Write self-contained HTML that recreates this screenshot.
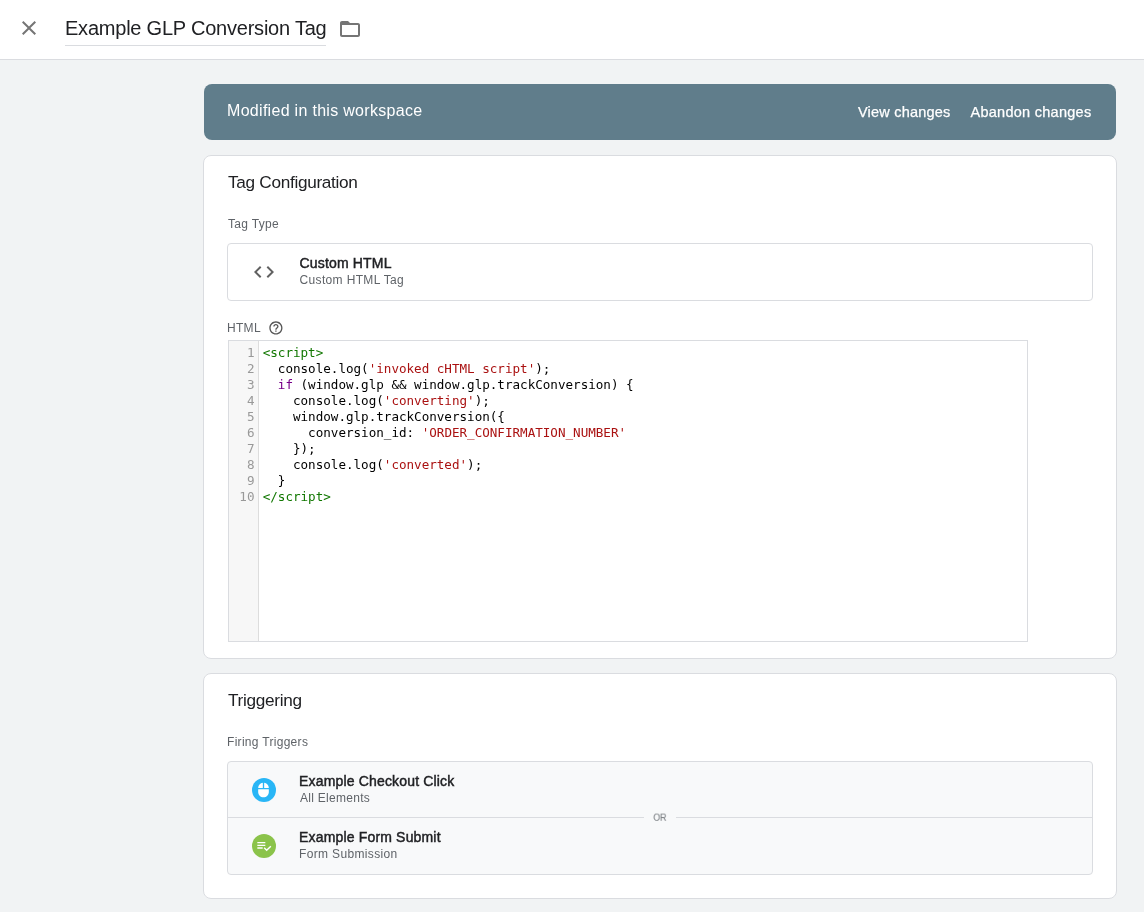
<!DOCTYPE html>
<html lang="en">
<head>
<meta charset="utf-8">
<title>Example GLP Conversion Tag</title>
<style>
*{box-sizing:border-box;margin:0;padding:0}
html,body{width:1144px;height:912px;overflow:hidden}
body{position:relative;background:#f1f3f4;font-family:"Liberation Sans",sans-serif;color:#202124}
#root{position:absolute;left:0;top:0;width:1144px;height:912px;will-change:transform}
.abs{position:absolute}
.tx{position:absolute;white-space:nowrap}
.header{left:0;top:0;width:1144px;height:60px;background:#fff;border-bottom:1px solid #dadce0}
.close{left:17px;top:16px;width:24px;height:24px}
.uline{left:65px;top:45px;width:261px;height:1px;background:#dadce0}
#title{left:65px;top:11px;font-size:20px;letter-spacing:-0.22px;line-height:34px;color:#202124}
.folder{left:338px;top:17px;width:24px;height:24px}
.banner{left:204px;top:84px;width:912px;height:56px;background:#607d8b;border-radius:8px}
.banner .tx{color:#fff}
#msg{left:227px;top:99px;line-height:24px;font-size:16px;letter-spacing:0.3px;color:#fff}
.act{top:100px;line-height:24px;font-size:14.5px;letter-spacing:0.2px;color:#fff;-webkit-text-stroke:0.25px #fff}
.card{left:203px;width:914px;background:#fff;border:1px solid #dadce0;border-radius:8px}
.h2{font-size:17.2px;line-height:24px;letter-spacing:-0.3px;color:#202124}
.lbl{font-size:12px;line-height:16px;letter-spacing:0.3px;color:#5f6368}
.box{left:227px;width:866px;border:1px solid #dadce0;border-radius:4px}
.nm{left:299px;font-size:14px;line-height:18px;letter-spacing:0.17px;color:#202124;-webkit-text-stroke:0.45px #202124}
.sub{left:299.500px;font-size:12px;line-height:16px;letter-spacing:0.35px;color:#5f6368}
.editor{left:228px;top:340px;width:800px;height:302px;border:1px solid #dadce0;background:#fff}
.gutter{left:229px;top:341px;width:30px;height:300px;background:#f7f7f7;border-right:1px solid #ddd}
.code{font-family:"DejaVu Sans Mono","Liberation Mono",monospace;font-size:12.6px;line-height:16px}
.ln{position:absolute;left:228px;width:26.5px;text-align:right;color:#999;height:16px;white-space:pre}
.cl{position:absolute;letter-spacing:-0.012px;left:262.700px;height:16px;white-space:pre;color:#000}
.t{color:#170}.s{color:#a11}.k{color:#708}
.ic{width:24px;height:24px}
</style>
</head>
<body>
<div id="root">
<div class="abs header"></div>
<svg class="abs close" viewBox="0 0 24 24"><path d="M19 6.41L17.59 5 12 10.59 6.410 5 5 6.410 10.590 12 5 17.590 6.410 19 12 13.410 17.590 19 19 17.590 13.410 12z" fill="#757575"/></svg>
<div class="tx" id="title">Example GLP Conversion Tag</div>
<div class="abs uline"></div>
<svg class="abs folder" viewBox="0 0 24 24"><path d="M20 8v10H4V8h16M10 4H4c-1.100 0-1.990.900-1.990 2L2 18c0 1.100.900 2 2 2h16c1.100 0 2-.900 2-2V8c0-1.100-.900-2-2-2h-8l-2-2z" fill="#757575"/></svg>

<div class="abs banner"></div>
<div class="tx" id="msg">Modified in this workspace</div>
<div class="tx act" id="view" style="left:858px">View changes</div>
<div class="tx act" id="abandon" style="left:970.500px;letter-spacing:0.27px">Abandon changes</div>

<div class="abs card" style="top:155px;height:504px"></div>
<div class="tx h2" id="h2a" style="left:228px;top:170px">Tag Configuration</div>
<div class="tx lbl" id="lbla" style="left:228px;top:216px">Tag Type</div>
<div class="abs box" style="top:243px;height:58px;background:#fff"></div>
<svg class="abs ic" style="left:252px;top:260px" viewBox="0 0 24 24"><path d="M9.400 16.600L4.800 12l4.600-4.600L8 6l-6 6 6 6 1.400-1.400zm5.200 0l4.600-4.600-4.600-4.600L16 6l6 6-6 6-1.400-1.400z" fill="#616161"/></svg>
<div class="tx nm" id="nm0" style="left:299.500px;top:254px">Custom HTML</div>
<div class="tx sub" id="sub0" style="top:272px">Custom HTML Tag</div>
<div class="tx lbl" id="lblh" style="left:227px;top:320px">HTML</div>
<svg class="abs" style="left:268.300px;top:320.100px;width:15.800px;height:15.800px" viewBox="0 0 24 24"><path d="M11 18h2v-2h-2v2zm1-16C6.480 2 2 6.480 2 12s4.480 10 10 10 10-4.480 10-10S17.520 2 12 2zm0 18c-4.410 0-8-3.590-8-8s3.590-8 8-8 8 3.590 8 8-3.590 8-8 8zm0-14c-2.210 0-4 1.790-4 4h2c0-1.100.900-2 2-2s2 .900 2 2c0 2-3 1.750-3 5h2c0-2.250 3-2.500 3-5 0-2.210-1.790-4-4-4z" fill="#555"/></svg>
<div class="abs editor"></div>
<div class="abs gutter"></div>
<div class="code">
<div class="ln" style="top:345px">1</div><div class="cl" style="top:345px"><span class="t">&lt;script&gt;</span></div>
<div class="ln" style="top:361px">2</div><div class="cl" style="top:361px">  console.log(<span class="s">'invoked cHTML script'</span>);</div>
<div class="ln" style="top:377px">3</div><div class="cl" style="top:377px">  <span class="k">if</span> (window.glp &amp;&amp; window.glp.trackConversion) {</div>
<div class="ln" style="top:393px">4</div><div class="cl" style="top:393px">    console.log(<span class="s">'converting'</span>);</div>
<div class="ln" style="top:409px">5</div><div class="cl" style="top:409px">    window.glp.trackConversion({</div>
<div class="ln" style="top:425px">6</div><div class="cl" style="top:425px">      conversion_id: <span class="s">'ORDER_CONFIRMATION_NUMBER'</span></div>
<div class="ln" style="top:441px">7</div><div class="cl" style="top:441px">    });</div>
<div class="ln" style="top:457px">8</div><div class="cl" style="top:457px">    console.log(<span class="s">'converted'</span>);</div>
<div class="ln" style="top:473px">9</div><div class="cl" style="top:473px">  }</div>
<div class="ln" style="top:489px">10</div><div class="cl" style="top:489px"><span class="t">&lt;/script&gt;</span></div>
</div>

<div class="abs card" style="top:673px;height:226px"></div>
<div class="tx h2" id="h2b" style="left:228px;top:688px">Triggering</div>
<div class="tx lbl" id="lblb" style="left:227px;top:734px">Firing Triggers</div>
<div class="abs box" style="top:761px;height:114px;background:#f8f9fa"></div>
<div class="abs" style="left:228px;top:817px;width:864px;height:1px;background:#dadce0"></div>
<div class="tx" id="or" style="left:644px;top:811px;width:32px;height:13px;background:#f8f9fa;font-size:10px;line-height:13px;text-align:center;color:#686d72"><span style="display:inline-block;transform:translateX(-0.600px) scale(0.87,0.9);transform-origin:50% 60%">OR</span></div>
<svg class="abs ic" style="left:252px;top:778px" viewBox="0 0 24 24"><circle cx="12" cy="12" r="12" fill="#29b6f6"/><path transform="translate(3.500 4) scale(0.666667)" d="M13 1.070V9h7c0-4.080-3.050-7.440-7-7.930zM4 15c0 4.420 3.580 8 8 8s8-3.580 8-8v-4H4v4zm7-13.930C7.050 1.560 4 4.920 4 9h7V1.070z" fill="#fff"/></svg>
<div class="tx nm" id="nm1" style="top:772px">Example Checkout Click</div>
<div class="tx sub" id="sub1" style="left:300px;letter-spacing:0.28px;top:790px">All Elements</div>
<svg class="abs ic" style="left:252px;top:834px" viewBox="0 0 24 24"><circle cx="12" cy="12" r="12" fill="#8bc34a"/><path transform="translate(4 4) scale(0.666667)" d="M14 10H2v2h12v-2zm0-4H2v2h12V6zM2 16h8v-2H2v2zm19.500-4.500L23 13l-6.990 7-4.510-4.500L13 14l3.010 3 5.490-5.500z" fill="#fff"/></svg>
<div class="tx nm" id="nm2" style="top:828px">Example Form Submit</div>
<div class="tx sub" id="sub2" style="left:299px;top:846px">Form Submission</div>
</div>
</body>
</html>
